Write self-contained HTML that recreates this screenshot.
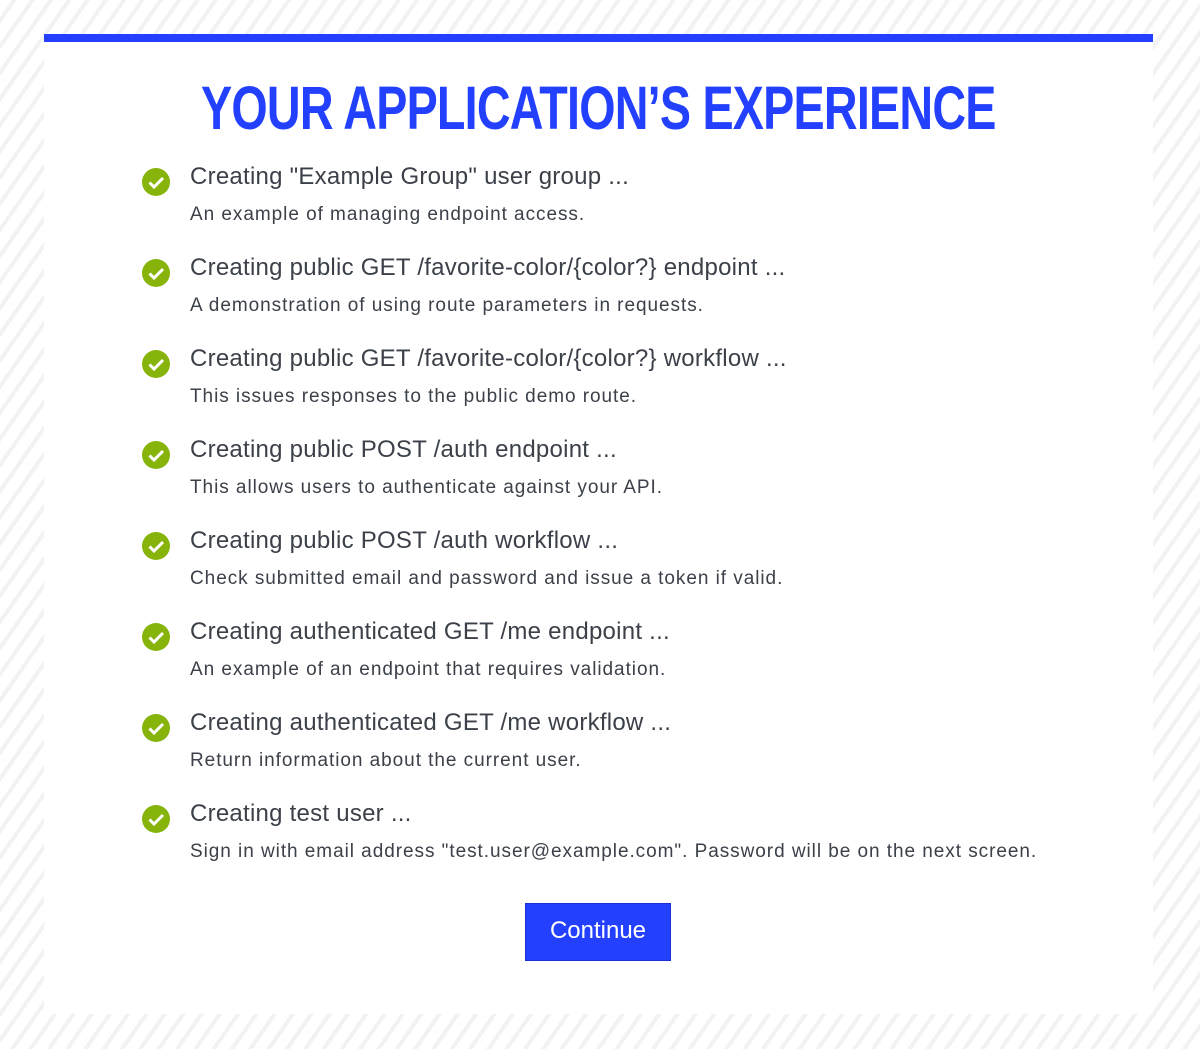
<!DOCTYPE html>
<html><head><style>
html,body{margin:0;padding:0}
body{width:1200px;height:1049px;position:relative;overflow:hidden;font-family:"Liberation Sans",sans-serif;
background:#fff repeating-linear-gradient(-55deg,#fff 0,#fff 11px,#f2f2f2 11px,#f2f2f2 15px);}
.card{position:absolute;left:44px;top:34px;width:1109px;height:980px;background:#fff;border-top:8px solid #2340ff;box-sizing:border-box}
h1{position:absolute;left:0;top:31px;width:100%;margin:0;text-align:center;color:#2340ff;font-size:61px;font-weight:bold;letter-spacing:-1px;line-height:70px}
h1 span{display:inline-block;transform:scaleX(0.765);transform-origin:center}
.item{position:absolute;left:98px;}
.ic{position:absolute;left:0;top:6px;width:28px;height:28px;border-radius:50%;background:#86b40a}
.ic svg{position:absolute;left:0;top:0}
.t{position:absolute;left:48px;top:0;white-space:nowrap;color:#3b4049;font-size:24px;letter-spacing:0.25px;line-height:30px}
.s{position:absolute;left:48px;top:41px;white-space:nowrap;color:#3b4049;font-size:19px;letter-spacing:0.95px;line-height:24px}
.btn{position:absolute;left:481px;top:861px;width:146px;height:58px;background:#2340ff;border:1px solid #1a30d0;box-sizing:border-box;color:#fff;font-size:24px;text-align:center;line-height:54px}
</style></head><body>
<div class="card">
<h1><span>YOUR APPLICATION’S EXPERIENCE</span></h1>
<div class="item" style="top:120px"><div class="ic"><svg width="28" height="28"><path d="M7.5 14.5l4.5 4.5 9-9" stroke="#fff" stroke-width="3" fill="none"/></svg></div><div class="t">Creating "Example Group" user group ...</div><div class="s">An example of managing endpoint access.</div></div>
<div class="item" style="top:211px"><div class="ic"><svg width="28" height="28"><path d="M7.5 14.5l4.5 4.5 9-9" stroke="#fff" stroke-width="3" fill="none"/></svg></div><div class="t">Creating public GET /favorite-color/{color?} endpoint ...</div><div class="s">A demonstration of using route parameters in requests.</div></div>
<div class="item" style="top:302px"><div class="ic"><svg width="28" height="28"><path d="M7.5 14.5l4.5 4.5 9-9" stroke="#fff" stroke-width="3" fill="none"/></svg></div><div class="t">Creating public GET /favorite-color/{color?} workflow ...</div><div class="s">This issues responses to the public demo route.</div></div>
<div class="item" style="top:393px"><div class="ic"><svg width="28" height="28"><path d="M7.5 14.5l4.5 4.5 9-9" stroke="#fff" stroke-width="3" fill="none"/></svg></div><div class="t">Creating public POST /auth endpoint ...</div><div class="s">This allows users to authenticate against your API.</div></div>
<div class="item" style="top:484px"><div class="ic"><svg width="28" height="28"><path d="M7.5 14.5l4.5 4.5 9-9" stroke="#fff" stroke-width="3" fill="none"/></svg></div><div class="t">Creating public POST /auth workflow ...</div><div class="s">Check submitted email and password and issue a token if valid.</div></div>
<div class="item" style="top:575px"><div class="ic"><svg width="28" height="28"><path d="M7.5 14.5l4.5 4.5 9-9" stroke="#fff" stroke-width="3" fill="none"/></svg></div><div class="t">Creating authenticated GET /me endpoint ...</div><div class="s">An example of an endpoint that requires validation.</div></div>
<div class="item" style="top:666px"><div class="ic"><svg width="28" height="28"><path d="M7.5 14.5l4.5 4.5 9-9" stroke="#fff" stroke-width="3" fill="none"/></svg></div><div class="t">Creating authenticated GET /me workflow ...</div><div class="s">Return information about the current user.</div></div>
<div class="item" style="top:757px"><div class="ic"><svg width="28" height="28"><path d="M7.5 14.5l4.5 4.5 9-9" stroke="#fff" stroke-width="3" fill="none"/></svg></div><div class="t">Creating test user ...</div><div class="s">Sign in with email address "test.user@example.com". Password will be on the next screen.</div></div>
<div class="btn">Continue</div>
</div>
</body></html>
